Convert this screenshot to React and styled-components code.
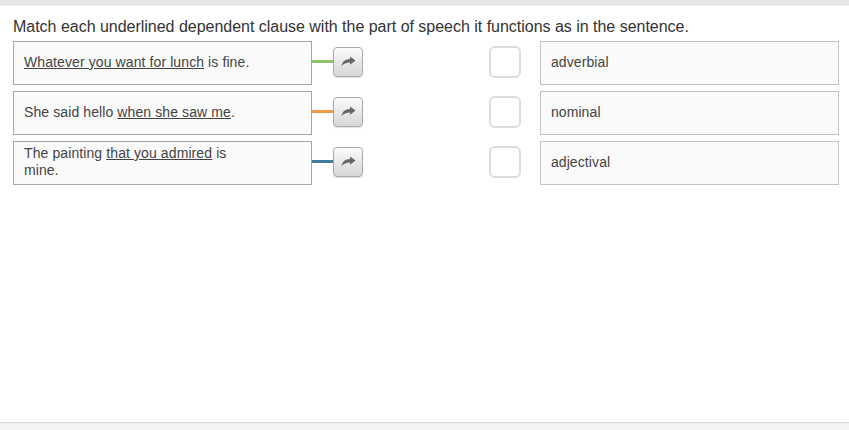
import React from 'react';
import styled, { createGlobalStyle } from 'styled-components';

const GlobalStyle = createGlobalStyle`
  html, body {
    margin: 0;
    padding: 0;
    background: #fff;
    font-family: "Liberation Sans", Arial, sans-serif;
  }
`;

const Page = styled.div`
  display: flex;
  flex-direction: column;
  height: 430px;
  overflow: hidden;
`;

const TopBar = styled.div`
  height: 5px;
  background: #e6e6e6;
  border-bottom: 1px solid #f0f0f0;
`;

const Main = styled.div`
  flex: 1;
  padding: 0 10px 0 13px;
`;

const Title = styled.h1`
  margin: 11px 0 4px;
  font-size: 16px;
  line-height: 20px;
  font-weight: normal;
  color: #333;
  letter-spacing: -0.02px;
`;

const Rows = styled.div`
  display: flex;
  flex-direction: column;
  gap: 6px;
`;

const Row = styled.div`
  display: flex;
  align-items: center;
`;

const Box = styled.div`
  box-sizing: border-box;
  width: 300px;
  height: 44px;
  display: flex;
  align-items: center;
  padding: 0 10px;
  padding-bottom: 2px;
  background: #fafafa;
  border: 1px solid ${p => (p.$light ? '#c4c4c4' : '#a6a6a6')};
  font-size: 14px;
  line-height: 17px;
  letter-spacing: 0.1px;
  color: #444;
`;

const Text = styled.span`
  max-width: 238px;
  u { text-decoration: underline; text-underline-offset: 1px; }
`;

const Connector = styled.div`
  width: 21px;
  height: 3px;
  margin-top: -3px;
  background: ${p => p.$color};
`;

const ArrowButton = styled.button`
  box-sizing: border-box;
  width: 30px;
  height: 30px;
  margin-top: -3px;
  padding: 0;
  display: flex;
  align-items: center;
  justify-content: center;
  border: 1px solid #a9a9a9;
  border-radius: 4px;
  background: linear-gradient(#fbfbfb, #d6d6d6);
  box-shadow: 0 1px 1px rgba(0, 0, 0, 0.12);
`;

const Spacer = styled.div`
  flex: 0 0 126px;
`;

const Check = styled.div`
  box-sizing: border-box;
  width: 32px;
  height: 32px;
  margin-top: -3px;
  margin-right: 19px;
  border: 2px solid #dcdcdc;
  border-radius: 6px;
  background: #fff;
`;

const Footer = styled.div`
  height: 7px;
  border-top: 1px solid #d8d8d8;
  box-shadow: inset 0 1px 0 #ececec;
  background: #f4f4f4;
`;

const Arrow = () => (
  <svg width="17" height="12" viewBox="0 0 16 12">
    <path
      d="M15 4.6 L9.6 0.6 L9.6 3 C5 3.1 1.8 5.4 1 10.2 C3 7.6 5.6 6.4 9.6 6.4 L9.6 8.7 Z"
      fill="#666"
    />
  </svg>
);

const rows = [
  {
    left: <><u>Whatever you want for lunch</u> is fine.</>,
    color: '#8dc46b',
    right: 'adverbial',
  },
  {
    left: <>She said hello <u>when she saw me</u>.</>,
    color: '#f29a4a',
    right: 'nominal',
  },
  {
    left: <>The painting <u>that you admired</u> is mine.</>,
    color: '#3f7d98',
    right: 'adjectival',
  },
];

export default function App() {
  return (
    <>
      <GlobalStyle />
      <Page>
        <TopBar />
        <Main>
          <Title>Match each underlined dependent clause with the part of speech it functions as in the sentence.</Title>
          <Rows>
            {rows.map((r, i) => (
              <Row key={i}>
                <Box><Text>{r.left}</Text></Box>
                <Connector $color={r.color} />
                <ArrowButton><Arrow /></ArrowButton>
                <Spacer />
                <Check />
                <Box $light>{r.right}</Box>
              </Row>
            ))}
          </Rows>
        </Main>
        <Footer />
      </Page>
    </>
  );
}
